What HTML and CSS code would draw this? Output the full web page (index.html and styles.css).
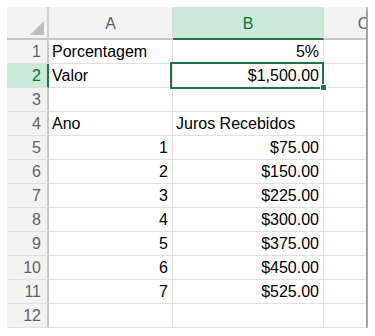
FILE: index.html
```html
<!DOCTYPE html>
<html lang="pt">
<head>
    <meta charset="UTF-8">
    <meta name="viewport" content="width=device-width, initial-scale=1.0">
    <title>Juros</title>
    <link rel="stylesheet" href="styles.css">
</head>
<body>

<div class="sheet">
    <div class="grid">
        <!-- cabeçalho das colunas -->
        <div class="hd corner"><span class="tri"></span></div>
        <div class="hd col">A</div>
        <div class="hd col active">B</div>
        <div class="hd col">C</div>

        <div class="hd row">1</div>
        <div class="cell">Porcentagem</div>
        <div class="cell num">5%</div>
        <div class="cell"></div>

        <div class="hd row active">2</div>
        <div class="cell">Valor</div>
        <div class="cell num selected">$1,500.00<span class="handle"></span></div>
        <div class="cell"></div>

        <div class="hd row">3</div>
        <div class="cell"></div>
        <div class="cell"></div>
        <div class="cell"></div>

        <div class="hd row">4</div>
        <div class="cell">Ano</div>
        <div class="cell">Juros Recebidos</div>
        <div class="cell"></div>

        <div class="hd row">5</div>
        <div class="cell num">1</div>
        <div class="cell num">$75.00</div>
        <div class="cell"></div>

        <div class="hd row">6</div>
        <div class="cell num">2</div>
        <div class="cell num">$150.00</div>
        <div class="cell"></div>

        <div class="hd row">7</div>
        <div class="cell num">3</div>
        <div class="cell num">$225.00</div>
        <div class="cell"></div>

        <div class="hd row">8</div>
        <div class="cell num">4</div>
        <div class="cell num">$300.00</div>
        <div class="cell"></div>

        <div class="hd row">9</div>
        <div class="cell num">5</div>
        <div class="cell num">$375.00</div>
        <div class="cell"></div>

        <div class="hd row">10</div>
        <div class="cell num">6</div>
        <div class="cell num">$450.00</div>
        <div class="cell"></div>

        <div class="hd row">11</div>
        <div class="cell num">7</div>
        <div class="cell num">$525.00</div>
        <div class="cell"></div>

        <div class="hd row">12</div>
        <div class="cell"></div>
        <div class="cell"></div>
        <div class="cell"></div>
    </div>
</div>

</body>
</html>
```

FILE: styles.css
```css
body {
    font-family: "Liberation Sans", Arial, sans-serif;
    background-color: #ffffff;
    margin: 7px;
    padding: 0;
}
.sheet {
    width: 359px;
    height: 321px;
    overflow: hidden;
    background-color: white;
    box-shadow: 1px 1px 8px 2px rgba(0, 0, 0, 0.55);
}
.grid {
    display: grid;
    grid-template-columns: 42px 124px 151px 80px;
    grid-template-rows: 33px repeat(12, 24px);
    width: 397px;
    font-size: 16px;
}
.grid > div {
    box-sizing: border-box;
    border-right: 1px solid #e1e1e1;
    border-bottom: 1px solid #e1e1e1;
    white-space: nowrap;
    line-height: 23px;
}
.hd {
    background-color: #f3f3f3;
    color: #616161;
}
.hd.col {
    text-align: center;
    line-height: 32px;
    padding-top: 1px;
    border-bottom: 2px solid #c8c8c8;
    border-right-color: #dadada;
}
.hd.corner {
    position: relative;
    border-bottom: 2px solid #c8c8c8;
    border-right: 2px solid #d0d0d0;
}
.tri {
    position: absolute;
    right: 3px;
    bottom: 3px;
    width: 0;
    height: 0;
    border-left: 14px solid transparent;
    border-bottom: 14px solid #bdbdbd;
}
.hd.row {
    text-align: right;
    padding-right: 6px;
    border-right: 2px solid #c8c8c8;
}
.hd.col.active {
    background-color: #cae9d6;
    color: #0f703b;
    border-bottom-color: #217346;
}
.hd.row.active {
    background-color: #cae9d6;
    color: #0f703b;
    border-right-color: #217346;
}
.cell {
    color: #000;
    padding: 0 4px 0 3px;
}
.cell.num {
    text-align: right;
}
.cell.selected {
    position: relative;
}
.cell.selected::after {
    content: "";
    position: absolute;
    top: -2px;
    left: -3px;
    right: -1px;
    bottom: -2px;
    border: 2px solid #217346;
}
.handle {
    position: absolute;
    right: -4px;
    bottom: -4px;
    width: 5px;
    height: 5px;
    background-color: #217346;
    border: 1px solid white;
    z-index: 1;
}
```
